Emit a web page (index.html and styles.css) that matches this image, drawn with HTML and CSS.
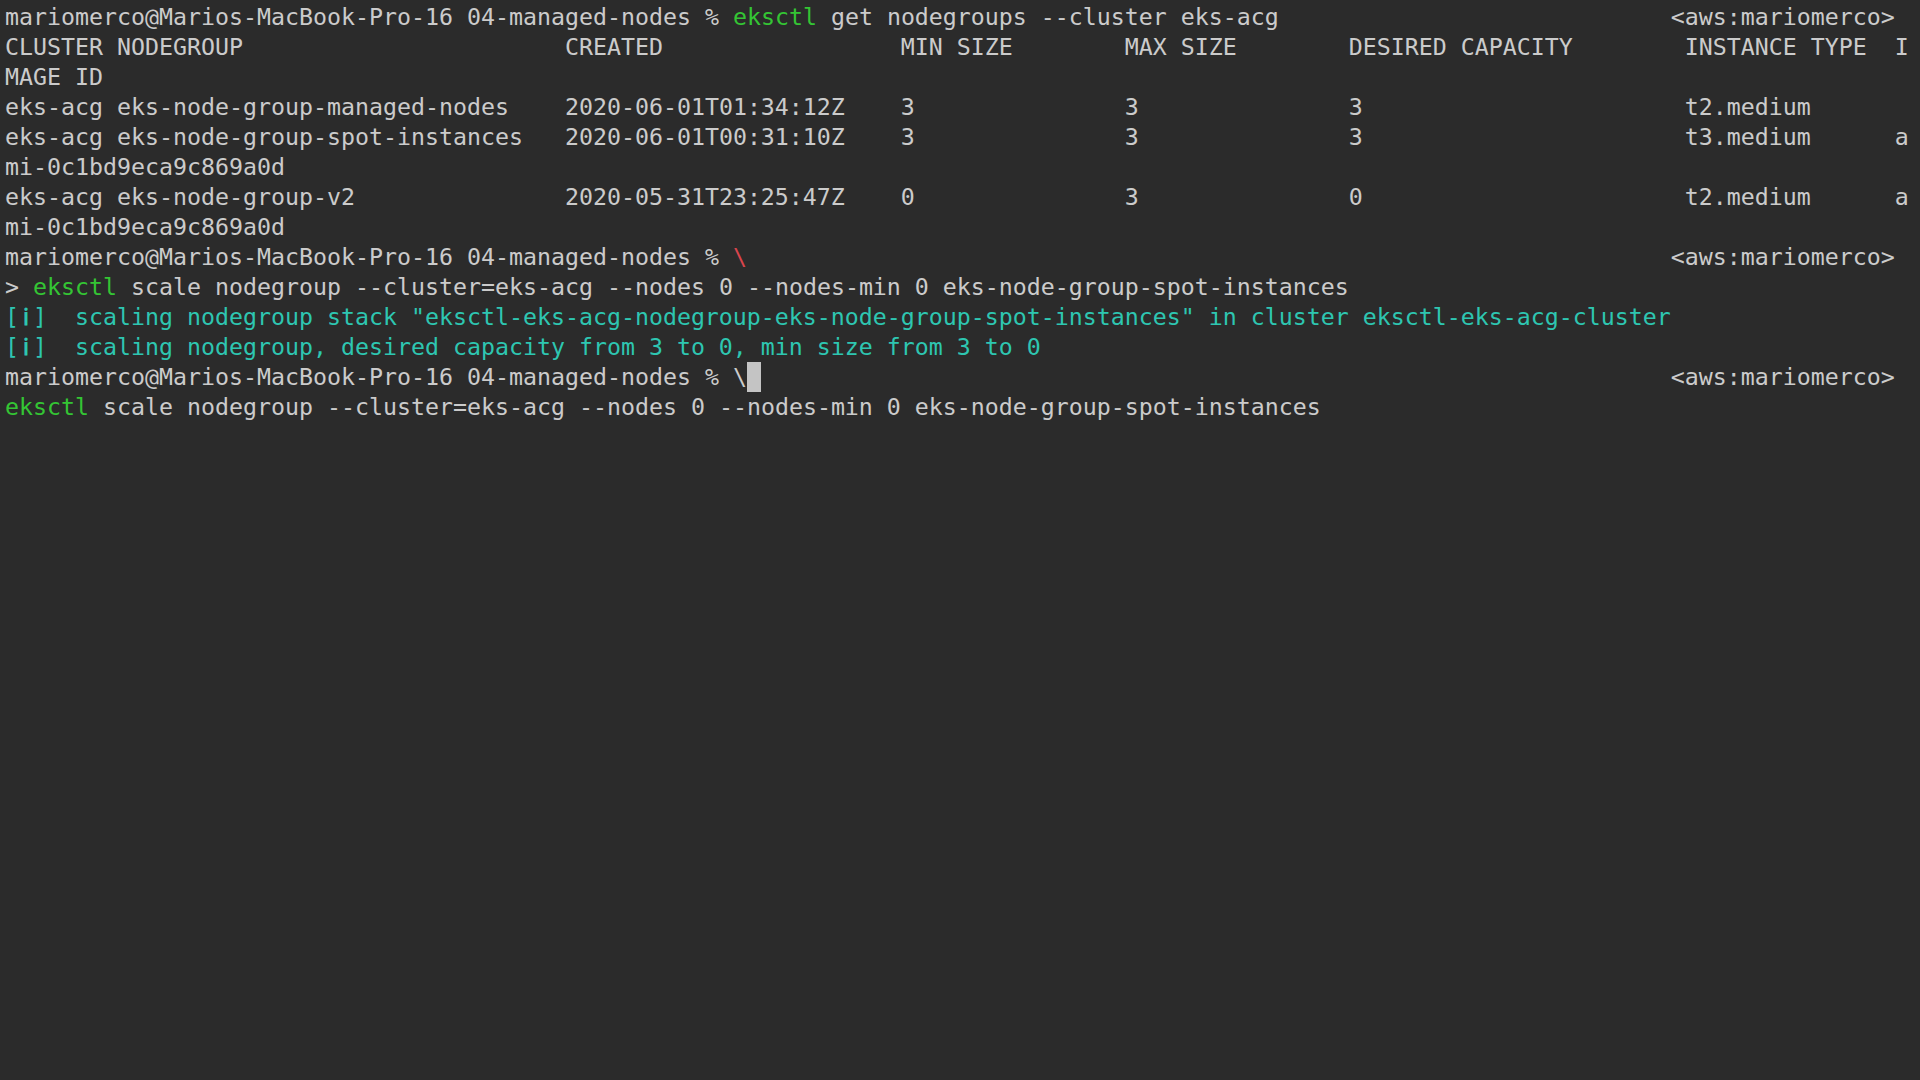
FILE: index.html
```html
<!DOCTYPE html>
<html lang="en">
<head>
<meta charset="utf-8">
<title>Terminal</title>
<link rel="stylesheet" href="styles.css">
</head>
<body>
<main class="terminal">
<pre class="screen">mariomerco@Marios-MacBook-Pro-16 04-managed-nodes % <span class="cmd">eksctl</span> get nodegroups --cluster eks-acg                            &lt;aws:mariomerco&gt;
CLUSTER NODEGROUP                       CREATED                 MIN SIZE        MAX SIZE        DESIRED CAPACITY        INSTANCE TYPE  I
MAGE ID
eks-acg eks-node-group-managed-nodes    2020-06-01T01:34:12Z    3               3               3                       t2.medium
eks-acg eks-node-group-spot-instances   2020-06-01T00:31:10Z    3               3               3                       t3.medium      a
mi-0c1bd9eca9c869a0d
eks-acg eks-node-group-v2               2020-05-31T23:25:47Z    0               3               0                       t2.medium      a
mi-0c1bd9eca9c869a0d
mariomerco@Marios-MacBook-Pro-16 04-managed-nodes % <span class="err">\</span>                                                                  &lt;aws:mariomerco&gt;
&gt; <span class="cmd">eksctl</span> scale nodegroup --cluster=eks-acg --nodes 0 --nodes-min 0 eks-node-group-spot-instances
<span class="info">[<span class="icon">ℹ</span>]  scaling nodegroup stack "eksctl-eks-acg-nodegroup-eks-node-group-spot-instances" in cluster eksctl-eks-acg-cluster</span>
<span class="info">[<span class="icon">ℹ</span>]  scaling nodegroup, desired capacity from 3 to 0, min size from 3 to 0</span>
mariomerco@Marios-MacBook-Pro-16 04-managed-nodes % \<span class="cursor"> </span>                                                                 &lt;aws:mariomerco&gt;
<span class="cmd">eksctl</span> scale nodegroup --cluster=eks-acg --nodes 0 --nodes-min 0 eks-node-group-spot-instances</pre>
</main>
</body>
</html>
```
FILE: styles.css
```css
html, body {
  margin: 0;
  padding: 0;
  background: #2b2b2b;
  height: 100%;
}

.terminal {
  width: 1920px;
  height: 1080px;
  background: #2b2b2b;
  padding: 1.5px 0 0 5px;
  box-sizing: border-box;
  overflow: hidden;
}

.screen {
  margin: 0;
  font-family: "DejaVu Sans Mono", "Liberation Mono", monospace;
  font-size: 23.25px;
  line-height: 30px;
  color: #cbcbcb;
  white-space: pre;
}

.cmd {
  color: #34c534;
}

.err {
  color: #d9454d;
}

.info {
  color: #2ec6b1;
}

.icon {
  display: inline-block;
  width: 1ch;
  text-align: center;
  font-weight: bold;
}

.cursor {
  display: inline-block;
  width: 1ch;
  height: 30px;
  vertical-align: top;
  background: #c4c4c4;
}
```
